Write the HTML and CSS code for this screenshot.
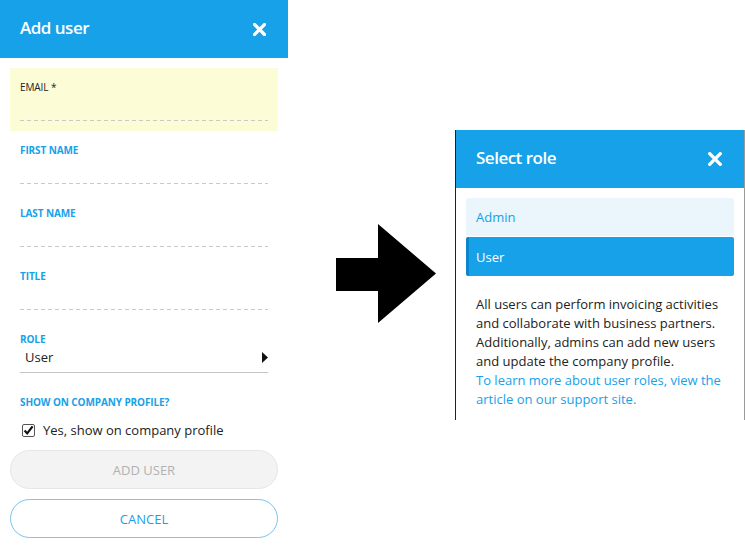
FILE: index.html
```html
<!DOCTYPE html>
<html>
<head>
<meta charset="utf-8">
<link rel="stylesheet" href="styles.css">
</head>
<body>
<div class="page">
  <section class="dialog dialog-left">
    <header class="dlg-head">
      <h1 class="dlg-title">Add user</h1>
      <svg class="close" width="13" height="13" viewBox="0 0 13 13"><path d="M1.5 1.5 L11.5 11.5 M11.5 1.5 L1.5 11.5" stroke="#fff" stroke-width="3.2" stroke-linecap="square"/></svg>
    </header>
    <div class="form">
      <div class="field field-focus">
        <div class="label label-dark">EMAIL *</div>
        <div class="input"></div>
      </div>
      <div class="field">
        <div class="label">FIRST NAME</div>
        <div class="input"></div>
      </div>
      <div class="field">
        <div class="label">LAST NAME</div>
        <div class="input"></div>
      </div>
      <div class="field">
        <div class="label">TITLE</div>
        <div class="input"></div>
      </div>
      <div class="field">
        <div class="label">ROLE</div>
        <div class="select">
          <span>User</span>
          <svg class="tri" width="6" height="11" viewBox="0 0 6 11"><polygon points="0,0 6,5.5 0,11" fill="#111"/></svg>
        </div>
      </div>
      <div class="field field-show">
        <div class="label">SHOW ON COMPANY PROFILE?</div>
        <div class="check">
          <svg class="checkbox" width="13" height="13" viewBox="0 0 13 13">
            <rect x="0.5" y="0.5" width="12" height="12" rx="1.5" fill="#fff" stroke="#555"/>
            <path d="M2.6 6.6 L5.2 9.4 L10.6 2.4" fill="none" stroke="#111" stroke-width="2.2"/>
          </svg>
          <span>Yes, show on company profile</span>
        </div>
      </div>
      <button class="btn btn-disabled">ADD USER</button>
      <button class="btn btn-outline">CANCEL</button>
    </div>
  </section>

  <div class="arrow-col">
    <svg class="arrow" width="100" height="99" viewBox="0 0 100 99"><polygon points="0,34 42,34 42,0 100,49.5 42,99 42,67 0,67" fill="#000"/></svg>
  </div>

  <section class="dialog dialog-right">
    <header class="dlg-head">
      <h1 class="dlg-title">Select role</h1>
      <svg class="close" width="14" height="14" viewBox="0 0 14 14"><path d="M1.7 1.7 L12.3 12.3 M12.3 1.7 L1.7 12.3" stroke="#fff" stroke-width="3.3" stroke-linecap="square"/></svg>
    </header>
    <div class="role-body">
      <div class="role-item">Admin</div>
      <div class="role-item role-selected">User</div>
      <div class="role-desc">
        <p class="role-text">All users can perform invoicing activities and collaborate with business partners. Additionally, admins can add new users and update the company profile.</p>
        <a class="role-link" href="#">To learn more about user roles, view the article on our support site.</a>
      </div>
    </div>
  </section>
</div>
</body>
</html>
```

FILE: styles.css
```css
* { box-sizing: border-box; }

html, body {
  margin: 0;
  padding: 0;
  background: #fff;
  font-family: "Open Sans", "Noto Sans", "DejaVu Sans", sans-serif;
  color: #222;
}

.page {
  display: flex;
  align-items: flex-start;
  width: 745px;
  height: 547px;
}

.dialog {
  background: #fff;
}

.dialog-left {
  width: 288px;
  flex: none;
}

.dlg-head {
  height: 58px;
  background: #17a1e8;
  display: flex;
  align-items: center;
  justify-content: space-between;
  padding: 0 22px 0 20px;
}

.dlg-title {
  margin: 0 0 3px;
  font-size: 17px;
  font-weight: 600;
  color: #fff;
  letter-spacing: -0.5px;
}

.close { display: block; }

.form {
  padding: 10px;
  display: flex;
  flex-direction: column;
}

.field {
  height: 63px;
  padding: 13px 10px 0;
}

.field-focus {
  background: #fcfdd6;
}

.label {
  font-size: 10px;
  line-height: 12px;
  height: 12px;
  font-weight: 700;
  color: #17a1e8;
  letter-spacing: -0.1px;
}

.label-dark {
  color: #222;
  font-weight: 400;
}

.input {
  height: 28px;
  background-image: repeating-linear-gradient(to right, #c9c9c9 0 4px, transparent 4px 7px);
  background-size: 100% 1px;
  background-repeat: no-repeat;
  background-position: left bottom;
}

.select {
  height: 28px;
  display: flex;
  align-items: center;
  justify-content: space-between;
  padding: 0 0 3px 5px;
  border-bottom: 1px solid #c4c4c4;
  font-size: 13px;
  color: #222;
}

.tri { display: block; }

.field-show {
  height: auto;
}

.check {
  margin-top: 13px;
  height: 18px;
  display: flex;
  align-items: center;
  gap: 8px;
  padding-left: 2px;
  font-size: 13px;
  color: #222;
}

.checkbox { display: block; flex: none; }

.btn {
  display: block;
  width: 268px;
  height: 39px;
  border-radius: 20px;
  font-family: inherit;
  font-size: 13px;
  padding: 0;
  margin: 0;
}

.btn-disabled {
  margin-top: 11px;
  background: #f3f3f3;
  border: 1px solid #e6e6e6;
  color: #b2b2b2;
}

.btn-outline {
  margin-top: 10px;
  background: #fff;
  border: 1px solid #78c3f0;
  color: #17a1e8;
}

.arrow-col {
  width: 167px;
  flex: none;
  align-self: center;
  padding-left: 48px;
}

.arrow { display: block; }

.dialog-right {
  width: 290px;
  flex: none;
  height: 290px;
  margin-top: 130px;
  border-left: 1px solid #222;
  border-right: 1px solid #9a9a9a;
}

.role-body {
  padding: 10px;
}

.role-item {
  height: 38px;
  display: flex;
  align-items: center;
  padding-left: 10px;
  font-size: 13px;
  color: #17a1e8;
  background: #eaf5fc;
  border-radius: 2px;
  margin-bottom: 1px;
}

.role-selected {
  height: 39px;
  background: #17a1e8;
  color: #fff;
  border-left: 3px solid #0b86cc;
  padding-left: 7px;
}

.role-desc {
  margin-top: 19px;
  padding: 0 10px;
  font-size: 13px;
  line-height: 19px;
  color: #222;
}

.role-text {
  margin: 0;
}

.role-link {
  display: block;
  color: #17a1e8;
  text-decoration: none;
}
```
